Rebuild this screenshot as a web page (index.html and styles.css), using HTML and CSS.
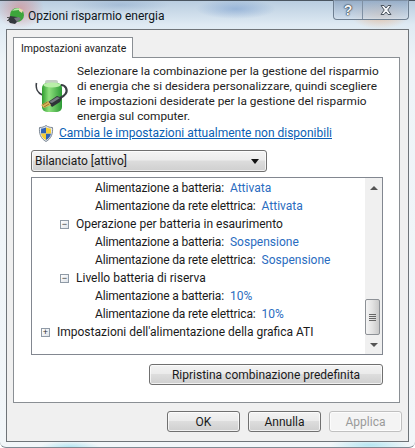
FILE: index.html
```html
<!DOCTYPE html>
<html lang="it">
<head>
<meta charset="utf-8">
<title>Opzioni risparmio energia</title>
<link rel="stylesheet" href="styles.css">
</head>
<body>
<div class="window">
  <div class="titlebar">
    <svg class="title-icon" width="18" height="20" viewBox="0 0 18 20">
      <circle cx="10" cy="9" r="7" fill="#3da53b"/>
      <path d="M5 5c2-3 7-4 9-1-2 0-7 0-9 1z" fill="#b8ecaa"/>
      <path d="M12 2l4 2-1 3-3-2z" fill="#e8d8b0"/>
      <path d="M3 10l7 1 2 3-4 4-5-1-2-3z" fill="#34383d"/>
      <path d="M7 12l5-1 2 2-4 3z" fill="#75797e"/>
      <path d="M0 11h3v1H0zM0 14h3v1H0z" fill="#555"/>
    </svg>
    <span class="title-text">Opzioni risparmio energia</span>
    <div class="caption-buttons">
      <span class="cap cap-help">?</span>
      <span class="cap cap-close">
        <svg width="16" height="12" viewBox="0 0 16 12"><path d="M3 1.500h3l2 2.500 2-2.500h3L9.800 6 13 10.500h-3L8 8l-2 2.500H3L6.200 6z" fill="#f4f6f8" stroke="#4b5560" stroke-width="1"/></svg>
      </span>
    </div>
  </div>
  <div class="client">
    <div class="tab">Impostazioni avanzate</div>
    <div class="panel">
      <div class="intro">
        <svg class="battery" width="34" height="36" viewBox="0 0 34 36">
          <defs>
            <linearGradient id="bat" x1="0" x2="1" y1="0" y2="0">
              <stop offset="0" stop-color="#2f9d2f"/>
              <stop offset=".35" stop-color="#8fe07e"/>
              <stop offset="1" stop-color="#2c9a35"/>
            </linearGradient>
          </defs>
          <path d="M1.500 4c-1 5 1 10 6 12" fill="none" stroke="#3b3f45" stroke-width="1.600"/>
          <rect x="10" y="1" width="13" height="5" rx="2" fill="#c3cfc3"/>
          <rect x="7" y="4" width="20" height="29" rx="5" fill="url(#bat)"/>
          <ellipse cx="17" cy="6" rx="8.500" ry="2.500" fill="#b9efa8"/>
          <path d="M25 19c5-2 8-6 6-10-1-2-3-3-5-3" fill="none" stroke="#3b3f45" stroke-width="2.200"/>
          <path d="M13 23l9-6 5 2-2 4-8 5z" fill="#2f3338"/>
          <path d="M14 23l8-5 3 1-8 5z" fill="#777c82"/>
          <path d="M6 26l7-4 3 4-7 3z" fill="#d9b45a"/>
          <path d="M7.500 26l5-3M9 28l5-3" stroke="#8a6a20" stroke-width=".8"/>
        </svg>
        <p class="intro-text">Selezionare la combinazione per la gestione del risparmio di energia che si desidera personalizzare, quindi scegliere le impostazioni desiderate per la gestione del risparmio energia sul computer.</p>
      </div>
      <div class="link-row">
        <svg width="16" height="17" viewBox="0 0 16 17">
          <path d="M8 .5c2 1.500 4 2 6.500 2 .5 6-1 11-6.500 14C2.500 13.500 1 8.500 1.500 2.500 4 2.500 6 2 8 .5z" fill="#e6e9ee" stroke="#7b8794"/>
          <path d="M8 2.500v6H3c0-2 0-3.500.2-5C5 3.500 6.500 3 8 2.500z" fill="#2f62b5"/>
          <path d="M8 8.500h5c-.5 3-2 5-5 6.500z" fill="#2f62b5"/>
          <path d="M8 2.500c1.500.5 3 1 4.800 1 .2 1.500.2 3 .2 5H8z" fill="#f3cd35"/>
          <path d="M3 8.500h5V15c-3-1.500-4.500-3.500-5-6.500z" fill="#f3cd35"/>
        </svg>
        <a class="link" href="#">Cambia le impostazioni attualmente non disponibili</a>
      </div>
      <div class="select">
        <span>Bilanciato [attivo]</span>
        <span class="arrow"></span>
      </div>
      <div class="list">
        <div class="tree">
          <div class="row lvl2"><span class="lbl">Alimentazione a batteria:</span><span class="val">Attivata</span></div>
          <div class="row lvl2"><span class="lbl">Alimentazione da rete elettrica:</span><span class="val">Attivata</span></div>
          <div class="row lvl1"><span class="box">−</span><span>Operazione per batteria in esaurimento</span></div>
          <div class="row lvl2"><span class="lbl">Alimentazione a batteria:</span><span class="val">Sospensione</span></div>
          <div class="row lvl2"><span class="lbl">Alimentazione da rete elettrica:</span><span class="val">Sospensione</span></div>
          <div class="row lvl1"><span class="box">−</span><span>Livello batteria di riserva</span></div>
          <div class="row lvl2"><span class="lbl">Alimentazione a batteria:</span><span class="val">10%</span></div>
          <div class="row lvl2"><span class="lbl">Alimentazione da rete elettrica:</span><span class="val">10%</span></div>
          <div class="row lvl0"><span class="box">+</span><span>Impostazioni dell'alimentazione della grafica ATI</span></div>
        </div>
        <div class="scrollbar">
          <span class="sb-up"></span>
          <span class="thumb"><i></i><i></i><i></i><i></i></span>
          <span class="sb-down"></span>
        </div>
      </div>
      <div class="reset-row">
        <button class="btn btn-reset" type="button">Ripristina combinazione predefinita</button>
      </div>
    </div>
    <div class="footer">
      <button class="btn btn-foot" type="button">OK</button>
      <button class="btn btn-foot" type="button">Annulla</button>
      <button class="btn btn-foot btn-disabled" type="button" disabled>Applica</button>
    </div>
  </div>
</div>
</body>
</html>
```
FILE: styles.css
```css
* { box-sizing: border-box; }
html, body { margin: 0; padding: 0; }
body {
  width: 415px;
  height: 448px;
  overflow: hidden;
  font-family: Roboto, "Open Sans", sans-serif;
  font-size: 12px;
  color: #1a1a1a;
}
.window {
  width: 415px;
  height: 448px;
  padding: 0 6px 6px 6px;
  display: flex;
  flex-direction: column;
  border-top: 1px solid #4a5560;
  border-bottom: 1px solid #7f8a94;
  border-radius: 0 0 6px 6px;
  background:
    radial-gradient(ellipse 24px 20px at 20px 8px, rgba(214,120,120,.55), transparent),
    radial-gradient(ellipse 30px 14px at 380px 14px, rgba(235,170,120,.6), transparent),
    radial-gradient(ellipse 40px 10px at 236px 8px, rgba(70,120,190,.35), transparent),
    radial-gradient(ellipse 50px 8px at 120px 4px, rgba(90,130,180,.25), transparent),
    radial-gradient(ellipse 30px 6px at 70px 446px, rgba(120,215,235,.5), transparent),
    radial-gradient(ellipse 40px 6px at 370px 444px, rgba(120,215,235,.5), transparent),
    linear-gradient(180deg, #b9cde0 0, #dfeaf3 24px, #eef4f8 60px, #f2f6f9 100%);
}
.titlebar {
  height: 28px;
  flex: none;
  display: flex;
  align-items: center;
  position: relative;
  gap: 3px;
}
.title-icon { flex: none; margin: 2px 0 0 1px; }
.title-text {
  font-size: 12px;
  color: #10161c;
  margin-top: 2px;
}
.caption-buttons {
  position: absolute;
  top: -1px;
  right: 0;
  display: flex;
  height: 20px;
  border: 1px solid #6e7f91;
  border-top: none;
  border-radius: 0 0 4px 4px;
  background: linear-gradient(180deg, rgba(130,155,185,.65), rgba(205,220,235,.7));
  box-shadow: inset 0 0 1px #fff;
}
.cap {
  display: flex;
  align-items: center;
  justify-content: center;
  height: 100%;
}
.cap-help {
  width: 29px;
  border-right: 1px solid #7f90a3;
  font: bold 14px "Liberation Sans", sans-serif;
  color: #f4f6f8;
  text-shadow: 0 0 1px #2a3540, 0 0 1px #2a3540, 0 0 2px #2a3540;
}
.cap-close { width: 45px; }
.client {
  flex: 1;
  background: #f0f0f0;
  border: 1px solid #6f7479;
  padding: 7px 8px 9px 6px;
  display: flex;
  flex-direction: column;
  position: relative;
}
.tab {
  width: 120px;
  height: 21px;
  background: #fff;
  border: 1px solid #8a8f94;
  border-bottom: none;
  padding: 3px 0 0 7px;
  font-size: 10.500px;
  line-height: 15px;
  white-space: nowrap;
  position: relative;
  z-index: 1;
  margin-bottom: -1px;
}
.panel {
  height: 346px;
  flex: none;
  background: #fff;
  border: 1px solid #8a8f94;
  padding: 6px 16px 0 17px;
  display: flex;
  flex-direction: column;
}
.intro {
  display: flex;
  gap: 8px;
  height: 60px;
  flex: none;
}
.battery { flex: none; margin: 15px 0 0 4px; }
.intro-text {
  margin: 0;
  line-height: 15px;
  font-size: 11.800px;
  color: #222;
  width: 309px;
  flex: none;
}
.link-row {
  display: flex;
  align-items: center;
  gap: 5px;
  height: 18px;
  margin-left: 7px;
  flex: none;
}
.link {
  color: #0a5fb4;
  text-decoration: underline;
  white-space: nowrap;
}
.select {
  width: 236px;
  height: 22px;
  flex: none;
  margin-top: 8px;
  border: 1px solid #707070;
  border-radius: 3px;
  background: linear-gradient(180deg, #f4f4f4 0, #ececec 45%, #dcdcdc 50%, #cfcfcf 100%);
  box-shadow: inset 0 0 0 1px rgba(255,255,255,.7);
  display: flex;
  align-items: center;
  justify-content: space-between;
  padding: 0 7px 0 3px;
}
.arrow {
  width: 0;
  height: 0;
  border-left: 4px solid transparent;
  border-right: 4px solid transparent;
  border-top: 5px solid #111;
}
.list {
  width: 352px;
  height: 178px;
  flex: none;
  margin-top: 5px;
  border: 1px solid #828790;
  display: flex;
}
.tree {
  flex: 1;
  padding-top: 1px;
}
.row {
  height: 18px;
  display: flex;
  align-items: center;
  white-space: nowrap;
  color: #1a1a1a;
}
.lvl2 { padding-left: 63px; }
.lvl1 { padding-left: 28px; }
.lvl0 { padding-left: 9px; }
.lbl { letter-spacing: -.15px; }
.val { color: #2a6cc0; margin-left: 6px; }
.box {
  width: 9px;
  height: 9px;
  border: 1px solid #8f9aa6;
  background: linear-gradient(135deg, #fff, #dfe3e8);
  display: flex;
  align-items: center;
  justify-content: center;
  font: 9px/7px "Liberation Sans", sans-serif;
  color: #333;
  margin-right: 7px;
  flex: none;
}
.scrollbar {
  width: 17px;
  flex: none;
  background: #f0f0f0;
  display: flex;
  flex-direction: column;
  align-items: center;
  position: relative;
}
.sb-up {
  margin-top: 8px;
  border-left: 4px solid transparent;
  border-right: 4px solid transparent;
  border-bottom: 4px solid #555;
}
.sb-down {
  position: absolute;
  bottom: 7px;
  border-left: 4px solid transparent;
  border-right: 4px solid transparent;
  border-top: 4px solid #555;
}
.thumb {
  position: absolute;
  top: 121px;
  left: 0;
  width: 15px;
  height: 36px;
  border: 1px solid #8d9196;
  border-radius: 2px;
  background: linear-gradient(90deg, #f4f4f4, #e2e2e2 50%, #c9c9c9);
  display: flex;
  flex-direction: column;
  align-items: center;
  justify-content: center;
  gap: 1px;
}
.thumb i {
  display: block;
  width: 7px;
  height: 1px;
  background: #666;
}
.reset-row {
  display: flex;
  justify-content: flex-end;
  margin-top: 9px;
}
.btn {
  font-family: Roboto, "Open Sans", sans-serif;
  font-size: 12px;
  color: #1a1a1a;
  height: 21px;
  padding: 0;
  border: 1px solid #707070;
  border-radius: 3px;
  background: linear-gradient(180deg, #f3f3f3 0, #ebebeb 45%, #dddddd 50%, #cfcfcf 100%);
  box-shadow: inset 0 0 0 1px rgba(255,255,255,.7);
}
.btn-reset { width: 234px; }
.footer {
  margin-top: 8px;
  margin-right: -2px;
  display: flex;
  justify-content: flex-end;
  gap: 8px;
}
.btn-foot { width: 73px; }
.btn-disabled {
  color: #9a9a9a;
  background: #f4f4f4;
  border-color: #c0c0c0;
}
```
